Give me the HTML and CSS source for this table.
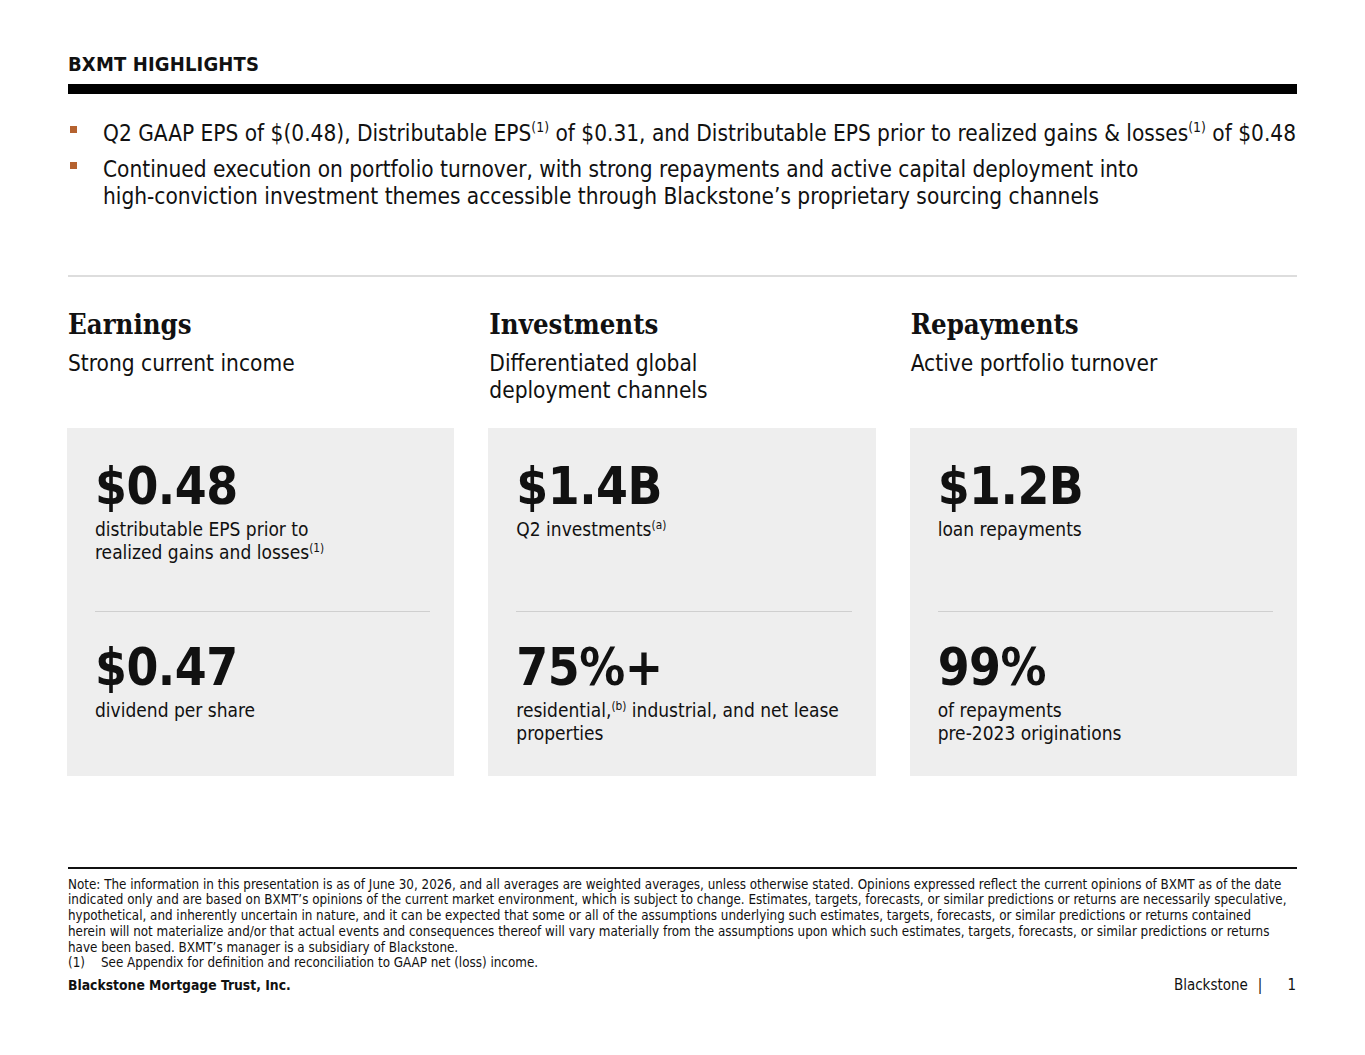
FILE: index.html
```html
<!DOCTYPE html>
<html lang="en">
<head>
<meta charset="utf-8">
<title>BXMT Highlights</title>
<link rel="stylesheet" href="styles.css">
</head>
<body>
<div class="page">
  <header class="head">
    <h1 class="title">BXMT HIGHLIGHTS</h1>
    <div class="bar"></div>
  </header>

  <ul class="bullets">
    <li>Q2 GAAP EPS of $(0.48), Distributable EPS<sup>(1)</sup> of $0.31, and Distributable EPS prior to realized gains &amp; losses<sup>(1)</sup> of $0.48</li>
    <li>Continued execution on portfolio turnover, with strong repayments and active capital deployment into<br>high-conviction investment themes accessible through Blackstone’s proprietary sourcing channels</li>
  </ul>

  <div class="rule"></div>

  <section class="cols">
    <div class="col">
      <h2 class="col-title">Earnings</h2>
      <p class="col-sub">Strong current income</p>
      <div class="card">
        <div class="metric metric-top">
          <div class="num">$0.48</div>
          <div class="lbl">distributable EPS prior to<br>realized gains and losses<sup>(1)</sup></div>
        </div>
        <div class="divider"></div>
        <div class="metric">
          <div class="num">$0.47</div>
          <div class="lbl">dividend per share</div>
        </div>
      </div>
    </div>

    <div class="col">
      <h2 class="col-title">Investments</h2>
      <p class="col-sub">Differentiated global<br>deployment channels</p>
      <div class="card">
        <div class="metric metric-top">
          <div class="num">$1.4B</div>
          <div class="lbl">Q2 investments<sup>(a)</sup></div>
        </div>
        <div class="divider"></div>
        <div class="metric">
          <div class="num">75%+</div>
          <div class="lbl">residential,<sup>(b)</sup> industrial, and net lease<br>properties</div>
        </div>
      </div>
    </div>

    <div class="col">
      <h2 class="col-title">Repayments</h2>
      <p class="col-sub">Active portfolio turnover</p>
      <div class="card">
        <div class="metric metric-top">
          <div class="num">$1.2B</div>
          <div class="lbl">loan repayments</div>
        </div>
        <div class="divider"></div>
        <div class="metric">
          <div class="num">99%</div>
          <div class="lbl">of repayments<br>pre-2023 originations</div>
        </div>
      </div>
    </div>
  </section>

  <footer class="foot">
    <div class="foot-rule"></div>
    <p class="note">Note: The information in this presentation is as of June 30, 2026, and all averages are weighted averages, unless otherwise stated. Opinions expressed reflect the current opinions of BXMT as of the date<br>indicated only and are based on BXMT’s opinions of the current market environment, which is subject to change. Estimates, targets, forecasts, or similar predictions or returns are necessarily speculative,<br>hypothetical, and inherently uncertain in nature, and it can be expected that some or all of the assumptions underlying such estimates, targets, forecasts, or similar predictions or returns contained<br>herein will not materialize and/or that actual events and consequences thereof will vary materially from the assumptions upon which such estimates, targets, forecasts, or similar predictions or returns<br>have been based. BXMT’s manager is a subsidiary of Blackstone.</p>
    <p class="note fn"><span class="fn-num">(1)</span>See Appendix for definition and reconciliation to GAAP net (loss) income.</p>
    <div class="foot-bar">
      <span class="company">Blackstone Mortgage Trust, Inc.</span>
      <span class="pageno">Blackstone<span class="pipe">|</span><span class="n">1</span></span>
    </div>
  </footer>
</div>
</body>
</html>
```

FILE: styles.css
```css
* { box-sizing: border-box; }

html, body {
  margin: 0;
  padding: 0;
  background: #ffffff;
}

body {
  font-family: "DejaVu Sans Condensed", "DejaVu Sans", sans-serif;
  color: #111111;
}

.page {
  width: 1365px;
  padding: 52px 68px 0 68px;
}

.title {
  margin: 0;
  font-size: 20px;
  line-height: 24px;
  font-weight: bold;
  letter-spacing: 0.15px;
  color: #111;
}

.bar {
  margin-top: 8px;
  height: 10px;
  background: #000;
}

.bullets {
  list-style: none;
  margin: 26px 0 0 0;
  padding: 0;
}

.bullets li {
  position: relative;
  padding-left: 35px;
  font-size: 22.45px;
  line-height: 27px;
  margin-bottom: 9px;
  white-space: nowrap;
}

.bullets li::before {
  content: "";
  position: absolute;
  left: 2px;
  top: 6px;
  width: 7px;
  height: 7px;
  background: #b5622f;
}

sup {
  font-size: 0.62em;
  line-height: 0;
  vertical-align: 0.62em;
}

.rule {
  margin-top: 65px;
  height: 2px;
  background: #dddddd;
}

.cols {
  display: grid;
  grid-template-columns: repeat(3, 1fr);
  column-gap: 35px;
  margin-top: 31px;
}

.col {
  display: flex;
  flex-direction: column;
}

.col-title {
  margin: 0;
  font-family: "DejaVu Serif Condensed", "DejaVu Serif", serif;
  font-weight: bold;
  font-size: 27.3px;
  line-height: 32px;
  color: #111;
}

.col-sub {
  margin: 10px 0 0 0;
  font-size: 22.5px;
  line-height: 27px;
  min-height: 54px;
}

.card {
  margin-top: 24px;
  margin-left: -1px;
  height: 348px;
  background: #eeeeee;
  padding: 0 24px 0 28px;
  display: flex;
  flex-direction: column;
}

.metric {
  padding-top: 31px;
}

.metric-top {
  height: 183px;
  padding-top: 34px;
}

.num {
  font-size: 51px;
  line-height: 50px;
  font-weight: bold;
  letter-spacing: -0.5px;
  color: #111;
}

.lbl {
  margin-top: 6px;
  font-size: 19px;
  line-height: 23px;
}

.divider {
  height: 1px;
  background: #cfcfcf;
}

.foot {
  margin-top: 91px;
}

.foot-rule {
  height: 1.5px;
  background: #111;
}

.note {
  margin: 0;
  font-size: 13.3px;
  line-height: 15.8px;
  white-space: nowrap;
}

.note:first-of-type {
  margin-top: 8px;
}

.fn {
  display: flex;
}

.fn-num {
  width: 33px;
}

.foot-bar {
  display: flex;
  justify-content: space-between;
  align-items: baseline;
  margin-top: 5px;
}

.company {
  font-weight: bold;
  font-size: 13.8px;
}

.pageno {
  font-size: 15px;
  margin-right: 1px;
}

.pipe {
  margin: 0 25px 0 10px;
}
```
